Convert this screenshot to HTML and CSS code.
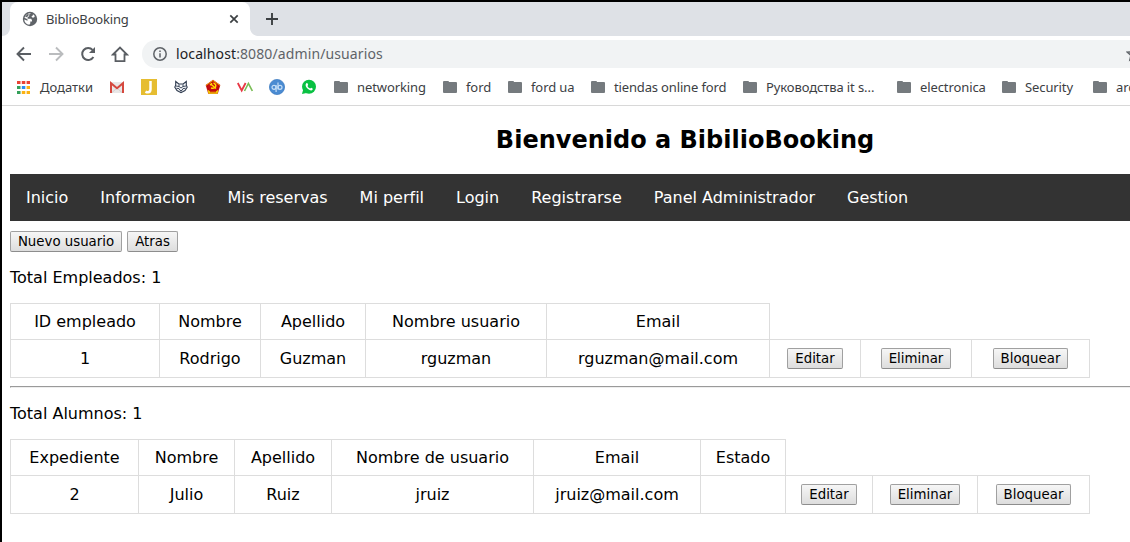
FILE: index.html
```html
<!DOCTYPE html>
<html lang="es">
<head>
<meta charset="utf-8">
<title>BiblioBooking</title>
<link rel="stylesheet" href="styles.css">
</head>
<body>
<div class="window">
  <div class="tabstrip">
    <div class="prev-tab"></div>
    <div class="tab">
      <svg class="globe" width="16" height="16" viewBox="0 0 16 16"><circle cx="8" cy="8" r="7.200" fill="#5f6368"/><path d="M9 2.200 7.200 3.600v1.700L5.600 6.300v1.400h3.600l.8 1.600v1.200H8.300v1.900l-1 1.400C4.300 13.400 2.300 11 2.300 8.400l3.200 1.300V8.200L2.500 6.800C3.200 3.800 6 2 9 2.200zM11 3.200l1.900 1.900-.9 1.500h-1.800l-.8-1.200 1.200-.6z" fill="#fff"/><path d="M5.600 3 7 3.600 5.800 5.600 4 6.200 3.200 5.400z" fill="#5f6368"/></svg>
      <span class="tab-title">BiblioBooking</span>
      <svg class="close" width="10" height="10" viewBox="0 0 10 10"><path d="M1.300 1.300l7.400 7.400M8.700 1.300 1.300 8.700" stroke="#3c4043" stroke-width="1.700"/></svg>
    </div>
    <div class="flare"></div>
    <svg class="plus" width="12" height="12" viewBox="0 0 12 12"><path d="M6 0v12M0 6h12" stroke="#3c4043" stroke-width="1.900"/></svg>
  </div>
  <div class="toolbar">
    <svg class="tool" width="16" height="16" viewBox="0 0 16 16"><path d="M15 8H2M8 1.500 1.500 8 8 14.500" fill="none" stroke="#5a5e63" stroke-width="1.900"/></svg>
    <svg class="tool" width="16" height="16" viewBox="0 0 16 16"><path d="M1 8h13M8 1.500 14.500 8 8 14.500" fill="none" stroke="#babcbe" stroke-width="1.900"/></svg>
    <svg class="tool" width="16" height="16" viewBox="0 0 16 16"><path d="M13.400 11A6 6 0 1 1 12.600 3.900" fill="none" stroke="#5a5e63" stroke-width="2"/><path d="M15 1v6H9z" fill="#5a5e63"/></svg>
    <svg class="tool home" width="18" height="18" viewBox="0 0 18 18"><path d="M2 9.500 9 2.500l7 7h-2.500v6.700h-9V9.500z" fill="none" stroke="#5a5e63" stroke-width="1.800"/></svg>
    <div class="omnibox">
      <svg width="14" height="14" viewBox="0 0 14 14"><circle cx="7" cy="7" r="6.200" fill="none" stroke="#5f6368" stroke-width="1.500"/><path d="M7 6.200v4.300M7 3.500v1.600" stroke="#5f6368" stroke-width="1.500"/></svg>
      <span class="url"><b>localhost</b>:8080/admin/usuarios</span>
      <svg class="star" width="16" height="16" viewBox="0 0 16 16"><path d="M8 1.500l1.900 4.300 4.700.4-3.500 3.100 1 4.600L8 11.500l-4.100 2.400 1-4.600L1.400 6.200l4.700-.4z" fill="none" stroke="#5f6368" stroke-width="1.500"/></svg>
    </div>
  </div>
  <div class="bookmarks">
    <div class="apps">
      <svg width="13" height="13" viewBox="0 0 13 13"><path d="M0 0h3.500v3H0zM4.800 0h3.500v3H4.800zM9.600 0H13v3H9.600z" fill="#ea4335"/><path d="M0 5h3.500v3H0zM0 10h3.500v3H0z" fill="#34a05a"/><path d="M4.800 5h3.500v3H4.800z" fill="#2a8bf2"/><path d="M9.600 5H13v3H9.600zM4.800 10h3.500v3H4.800zM9.600 10H13v3H9.600z" fill="#fbb213"/></svg>
      <span>Додатки</span>
    </div>
    <div class="favs">
      <svg width="16" height="16" viewBox="0 0 16 16"><path d="M1 3h14v11H1z" fill="#e9e7e7"/><path d="M3 13.500 8 9l5 4.500" fill="none" stroke="#d2cdcd"/><path d="M2 14V4.200L8 9.200l6-5V14" fill="none" stroke="#d5483e" stroke-width="2"/></svg>
      <svg width="16" height="16" viewBox="0 0 16 16"><path d="M0 0h16v16H0z" fill="#e6bd31"/><path d="M9.500 2v8.300q0 3-2.600 3-1.200 0-2.400-.7" fill="none" stroke="#fff" stroke-width="2.500"/></svg>
      <svg width="16" height="16" viewBox="0 0 16 16"><path d="M2.700 2.500 5.800 5h4.400l3.100-2.500v3.700l.9 2-2.200 3.300-4 2.200-4-2.200-2.200-3.300.9-2z" fill="#f3f5f8" stroke="#303c50" stroke-width="1.100"/><path d="M3 7l3 .5M13 7l-3 .5M3.500 9.300l2.500.3 1 1.700M12.500 9.300l-2.500.3-1 1.700M6 5.500v2L8 9l2-1.500v-2" fill="none" stroke="#303c50" stroke-width=".9"/><path d="M6.700 11h2.600L8 13z" fill="#303c50"/></svg>
      <svg width="16" height="16" viewBox="0 0 16 16"><path d="M8 .8 15.300 6 12.800 14.800H3.200L.7 6z" fill="#ca0b12"/><path d="M8 2.300 14 6.600 11.800 12H4.200L2 6.600z" fill="none" stroke="#b80b0b" stroke-width="1"/><path d="M.9 6.500 8 1.500l7.100 5" fill="none" stroke="#f5c900" stroke-width=".8"/><path d="M8.500 3.800c4 2 2.500 6.500-2.500 5.200M5 6l2-1.800M6 5.200l5 4.300" fill="none" stroke="#ffdf00" stroke-width="1.300"/><path d="M2.500 10.500 5 12.300h6l2.500-1.800-1 4.300h-9z" fill="#efc900"/><path d="M5 12.800h6" stroke="#ca0b12"/></svg>
      <svg width="16" height="16" viewBox="0 0 16 16"><path d="M.8 4 4.700 11.500 8.600 4" fill="none" stroke="#e83845" stroke-width="1.800"/><path d="M7.500 12 11.400 4.500l3.900 7.500" fill="none" stroke="#79bd55" stroke-width="1.600"/></svg>
      <svg width="16" height="16" viewBox="0 0 16 16"><circle cx="8" cy="8" r="7.600" fill="#4a8bd2" stroke="#3877be" stroke-width=".7"/><g fill="none" stroke="#c5def7" stroke-width="1.200"><circle cx="5" cy="8.300" r="2"/><path d="M7.100 6v7M9 3.500v7"/><circle cx="11" cy="8.300" r="2"/></g></svg>
      <svg width="16" height="16" viewBox="0 0 16 16"><circle cx="8" cy="7.800" r="7" fill="#09c142"/><path d="M1 15l1.200-4.500L5.500 14z" fill="#09c142"/><path d="M5.300 4.300q-2 2.500 1.700 5.700 3.200 2.500 4.700.5.500-1.200-1.500-1.700l-1 .8Q7.400 9 6.400 6.900l.8-.8Q6.700 3.500 5.300 4.300z" fill="#fff"/></svg>
    </div>
    <div class="folder f1"><i></i><span>networking</span></div>
    <div class="folder f2"><i></i><span>ford</span></div>
    <div class="folder f3"><i></i><span>ford ua</span></div>
    <div class="folder f4"><i></i><span>tiendas online ford</span></div>
    <div class="folder f5"><i></i><span>Руководства it s...</span></div>
    <div class="folder f6"><i></i><span>electronica</span></div>
    <div class="folder f7"><i></i><span>Security</span></div>
    <div class="folder f8"><i></i><span>arc</span></div>
  </div>
  <main class="page">
    <h1>Bienvenido a BibilioBooking</h1>
    <nav><a>Inicio</a><a>Informacion</a><a>Mis reservas</a><a>Mi perfil</a><a>Login</a><a>Registrarse</a><a>Panel Administrador</a><a>Gestion</a></nav>
    <div class="actions"><button class="b-new">Nuevo usuario</button><button class="b-back">Atras</button></div>
    <p>Total Empleados: 1</p>
    <table class="employees">
      <colgroup><col class="e1"><col class="e2"><col class="e3"><col class="e4"><col class="e5"><col class="e6"><col class="e7"><col class="e8"></colgroup>
      <tr class="head"><td>ID empleado</td><td>Nombre</td><td>Apellido</td><td>Nombre usuario</td><td>Email</td></tr>
      <tr class="row"><td>1</td><td>Rodrigo</td><td>Guzman</td><td>rguzman</td><td>rguzman@mail.com</td><td><button class="b-edit">Editar</button></td><td><button class="b-del">Eliminar</button></td><td><button class="b-lock">Bloquear</button></td></tr>
    </table>
    <hr>
    <p>Total Alumnos: 1</p>
    <table class="students">
      <colgroup><col class="s1"><col class="s2"><col class="s3"><col class="s4"><col class="s5"><col class="s6"><col class="s7"><col class="s8"><col class="s9"></colgroup>
      <tr class="head"><td>Expediente</td><td>Nombre</td><td>Apellido</td><td>Nombre de usuario</td><td>Email</td><td>Estado</td></tr>
      <tr class="row"><td>2</td><td>Julio</td><td>Ruiz</td><td>jruiz</td><td>jruiz@mail.com</td><td></td><td><button class="b-edit">Editar</button></td><td><button class="b-del">Eliminar</button></td><td><button class="b-lock">Bloquear</button></td></tr>
    </table>
  </main>
</div>
</body>
</html>
```
FILE: styles.css
```css
* { box-sizing: border-box; }
html, body { margin: 0; height: 542px; overflow: hidden; background: #fff; }
svg { display: block; flex: none; }
.window { width: 1368px; height: 542px; border-top: 2px solid #000; border-left: 2px solid #000; overflow: hidden; font-family: "Noto Sans", sans-serif; }

.tabstrip { height: 34px; background: #dee1e6; display: flex; align-items: center; }
.prev-tab { width: 8px; height: 34px; background: #fff; }
.prev-tab::before { content: ""; display: block; height: 34px; background: #dee1e6; border-bottom-right-radius: 8px; }
.tab { width: 240px; height: 34px; background: #fff; border-radius: 8px 8px 0 0; display: flex; align-items: center; padding: 0 11px 0 12px; }
.tab-title { margin-left: 8px; font-size: 13px; line-height: 18px; letter-spacing: -0.17px; color: #3c4043; flex: 1; white-space: nowrap; }
.flare { width: 8px; height: 8px; align-self: flex-end; background: radial-gradient(circle at 100% 0, #dee1e6 7.5px, #fff 8.3px); }
.plus { margin-left: 8px; }

.toolbar { height: 36px; display: flex; align-items: center; padding-left: 14px; }
.tool { margin-right: 16px; }
.home { margin: 0 13px 0 -1px; }
.omnibox { flex: 1; height: 28px; border-radius: 14px 0 0 14px; background: #f1f3f4; display: flex; align-items: center; padding-left: 11px; }
.url { margin-left: 9px; width: 950px; font-size: 14px; line-height: 20px; letter-spacing: 0.11px; color: #5f6368; white-space: nowrap; }
.url b { font-weight: 400; color: #202124; }

.bookmarks { height: 34px; border-bottom: 1px solid #d8d8d8; display: flex; align-items: center; padding: 0 0 3px 15px; font-size: 13px; line-height: 18px; color: #3c4043; white-space: nowrap; }
.apps { display: flex; align-items: center; gap: 10px; width: 92px; }
.favs { display: flex; gap: 16px; width: 225px; }
.folder { display: flex; align-items: center; gap: 9px; flex: none; letter-spacing: -0.1px; }
.folder i { position: relative; width: 14px; height: 11px; margin-top: 1px; background: #757a7e; border-radius: 1px; }
.folder i::before { content: ""; position: absolute; left: 0; top: -1px; width: 6px; height: 2px; background: #757a7e; border-radius: 1px 1px 0 0; }
.f1 { width: 109px; } .f2 { width: 65px; } .f3 { width: 83px; } .f4 { width: 152px; }
.f5 { width: 154px; } .f6 { width: 105px; } .f7 { width: 91px; } .f8 { width: 120px; }
.f4 { letter-spacing: -0.15px; }

.page { padding: 0 8px; font: 16px/19px "DejaVu Sans", sans-serif; color: #000; }
h1 { margin: 0; padding-top: 20px; height: 68px; font-size: 24px; line-height: 28px; text-align: center; }
nav { display: flex; height: 47px; background: #333; color: #fff; }
nav a { padding: 14px 16px; }
.actions { display: flex; gap: 5px; margin-top: 10px; }
button { height: 21px; padding: 0; font: 13.333px/16px "DejaVu Sans", sans-serif; color: #000; white-space: nowrap; border: 1px solid #a0a0a0; border-bottom-color: #8d8d8d; border-radius: 2px; background: linear-gradient(#f6f6f6, #dddddd); vertical-align: middle; }
.b-new { width: 112px; } .b-back { width: 51px; } .b-edit { width: 56px; } .b-del { width: 70px; } .b-lock { width: 75px; }
p { margin: 16px 0; }
table { width: 1080px; table-layout: fixed; border-collapse: collapse; }
td { border: 1px solid #ddd; padding: 0; text-align: center; vertical-align: middle; }
.head { height: 36px; } .row { height: 38px; }
hr { margin: 8px 0 16px; height: 2px; border: 0; border-top: 1px solid #9a9a9a; border-left: 1px solid #9a9a9a; border-bottom: 1px solid #eee; }
.e1 { width: 149px; } .e2 { width: 101px; } .e3 { width: 105px; } .e4 { width: 181px; }
.e5 { width: 223px; } .e6 { width: 91px; } .e7 { width: 111px; } .e8 { width: 118px; }
.s1 { width: 128px; } .s2 { width: 96px; } .s3 { width: 97px; } .s4 { width: 202px; }
.s5 { width: 167px; } .s6 { width: 85px; } .s7 { width: 87px; } .s8 { width: 105px; } .s9 { width: 112px; }
```
